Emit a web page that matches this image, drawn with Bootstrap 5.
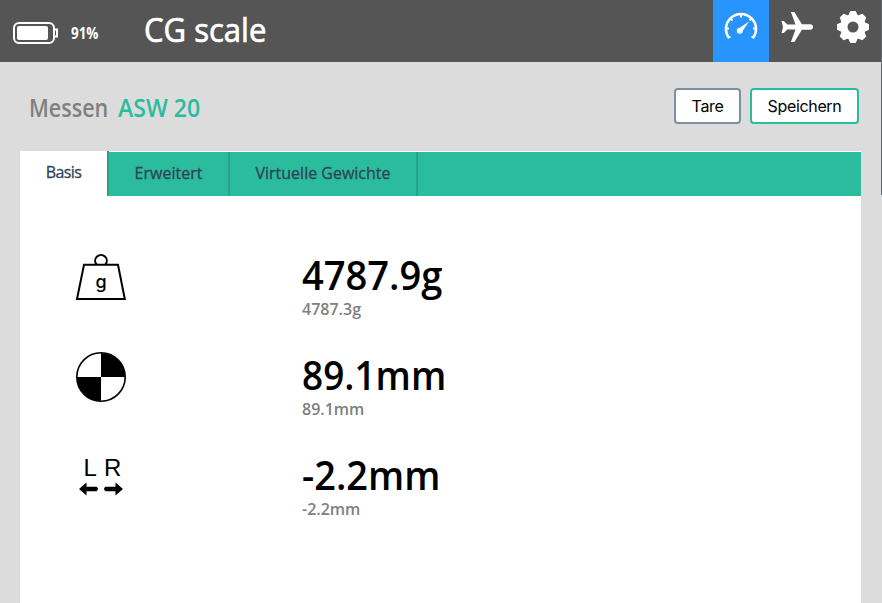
<!DOCTYPE html>
<html lang="de">
<head>
<meta charset="utf-8">
<meta name="viewport" content="width=device-width, initial-scale=1">
<title>CG scale</title>
<link rel="stylesheet" href="https://cdn.jsdelivr.net/npm/bootstrap@5.3.0/dist/css/bootstrap.min.css">
<style>
body{background:#dcdcdc;font-family:"Trebuchet MS","Open Sans","Noto Sans",sans-serif;height:603px;overflow:hidden}
.topbar{height:62px;background:#555;padding-right:1px}
.battery{margin-left:13px;margin-top:5px}
.percent{font-size:16px;font-weight:700;line-height:20px;margin:3px 0 0 12px;width:73px;transform:scaleX(.84);transform-origin:left}
.brand{font-size:32px;font-weight:400;line-height:40px;margin-top:-3px;-webkit-text-stroke:.7px #fff;transform:scaleX(.97);transform-origin:left}
.navicon{width:56px;height:62px}
.navicon.current{background:#2894fe}
.heading{height:89px;padding:0 23px 0 29px}
.title{font-size:25px;line-height:30px;font-weight:600;color:#808080;margin:0}
.title span{display:inline-block;transform-origin:left}
.word{width:89px;transform:scaleX(.86)}
.model{color:#2bbc9e;transform:scaleX(.925)}
.action{height:36px;border:2px solid #2bbc9e;border-radius:4px;background:#fff;color:#000;font:16px/20px Inter,sans-serif;padding:0;width:109px;letter-spacing:-.35px;margin-top:-1px}
.action.tare{border-color:#7f8ea0;width:67px;margin-right:9px}
.panel{width:841px;height:452px;margin-left:20px;background:#fff}
.tabs{height:44px;background:#2bbc9e;margin-top:1px}
.tabs .nav-link{height:44px;border-radius:0;color:#2f4356;font-size:16px;padding:0;line-height:43px;text-align:center;border-right:2px solid #25a188;-webkit-text-stroke:.3px #2f4356}
.tabs .nav-link.active{background:#fff;height:45px;margin-top:-1px;width:89px;letter-spacing:-.6px}
.measure{height:100px;padding-left:52px}
.symbol{width:58px;height:58px;margin:4px 172px 0 0}
.reading{font-size:40px;line-height:48px;font-weight:600;color:#000;margin-top:7px;transform-origin:left}
.weight{transform:scaleX(.952)}
.balance{transform:scaleX(.925)}
.lateral{transform:scaleX(.948)}
.raw{font-size:16px;line-height:20px;font-weight:600;color:#808080}
.edge{position:absolute;right:0;top:0;width:1px;height:195px;background:#626a7d}
</style>
<script src="https://cdn.jsdelivr.net/npm/bootstrap@5.3.0/dist/js/bootstrap.bundle.min.js"></script>
</head>
<body>
<header class="topbar d-flex align-items-center text-white">
<svg class="battery" width="46" height="23" viewBox="0 0 46 23" fill="none" stroke="#fff" stroke-width="2"><rect x="1" y="1" width="40" height="20" rx="5"/><rect x="4" y="4" width="31" height="14" rx="2" fill="#fff" stroke="none"/><path d="M41 7.500h3v7H41"/></svg>
<span class="percent">91%</span>
<h1 class="brand mb-0">CG scale</h1>
<nav class="d-flex ms-auto">
<a class="navicon current" href="#" aria-label="Messen"><svg width="56" height="62" fill="none" stroke="#fff"><path d="M16 38A15 15 0 1 1 40 38" stroke-width="2.600"/><path d="M28 15v2.500M17.500 18.500l2 2M38.500 18.500L36.500 20.500M13.500 28.500h2.500M40 28.500h2.500M15 38l2.500-1.500M41 38l-2.500-1.500" stroke-width="2"/><path d="M36 21.500l-6.200 9.300a3 3 0 1 1-3-3z" fill="#fff" stroke="none"/></svg></a>
<a class="navicon" href="#" aria-label="Modelle"><svg width="56" height="62" fill="#fff"><path d="M12.500 21h2.300l3.500 3.500h8.200L21.900 12h3.500l7.500 12.200H41q3 .300 3 2.800t-3 2.800h-8.100L25.400 42h-3.500l4.600-12.500h-8.200l-3.500 3.500h-2.300l1.500-6z"/></svg></a>
<a class="navicon" href="#" aria-label="Einstellungen"><svg width="56" height="62" viewBox="0 0 56 62"><g fill="#fff" transform="translate(28 27)"><circle r="12.500"/><g id="gear"><path id="tooth" d="M-5-11L-2.700-16h5.400L5-11V11L2.700 16h-5.400L-5 11z"/><use href="#tooth" transform="rotate(90)"/></g><use href="#gear" transform="rotate(45)"/></g><circle cx="28" cy="27" r="5.500" fill="#555"/></svg></a>
</nav>
</header>
<main>
<div class="heading d-flex align-items-center justify-content-between">
<h2 class="title d-flex"><span class="word">Messen</span><span class="model">ASW 20</span></h2>
<div class="d-flex"><button class="action tare" type="button">Tare</button><button class="action" type="button">Speichern</button></div>
</div>
<section class="panel d-flex flex-column">
<nav class="tabs nav flex-nowrap"><a class="nav-link active" href="#">Basis</a><a class="nav-link" href="#" style="width:121px">Erweitert</a><a class="nav-link" href="#" style="width:188px">Virtuelle Gewichte</a></nav>
<div class="pt-5">
<div class="measure d-flex">
<svg class="symbol" viewBox="72 248 58 58" fill="none" stroke="#000" stroke-width="2"><path d="M84 264.800h34l6.800 34.200H77z"/><path d="M96.500 264.500a5.800 5.800 0 1 1 9 0"/><text x="101" y="288" font-family="Inter,sans-serif" font-size="18" font-weight="500" fill="#000" stroke="none" text-anchor="middle">g</text></svg>
<div><div class="reading weight">4787.9g</div><div class="raw">4787.3g</div></div>
</div>
<div class="measure d-flex">
<svg class="symbol" viewBox="72 348 58 58"><circle cx="101" cy="377" r="24.200" fill="#fff" stroke="#000" stroke-width="1.600"/><path d="M101 377V353a24 24 0 0 1 24 24zM101 377v24a24 24 0 0 1-24-24z"/></svg>
<div><div class="reading balance">89.1mm</div><div class="raw">89.1mm</div></div>
</div>
<div class="measure d-flex">
<svg class="symbol" viewBox="72 448 58 58"><text x="83.500" y="475.500" font-family="Liberation Sans,sans-serif" font-size="24">L</text><text x="104" y="475.500" font-family="Liberation Sans,sans-serif" font-size="24">R</text><path d="M79 489l7.500-6.500v4.300h10q3 2.200 0 4.400h-10v4.300zM123 489l-7.500-6.500v4.300h-10q-3 2.200 0 4.400h10v4.300z"/></svg>
<div><div class="reading lateral">-2.2mm</div><div class="raw">-2.2mm</div></div>
</div>
</div>
</section>
</main>
<div class="edge"></div>
</body>
</html>
